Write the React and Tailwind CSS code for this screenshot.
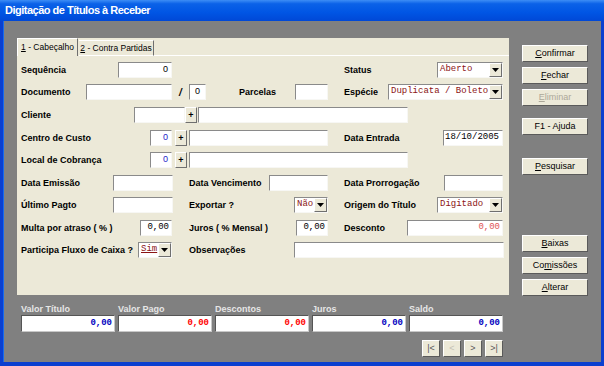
import React from 'react'

const sans = "font-['Liberation_Sans',Arial,sans-serif]"
const mono = "font-['Liberation_Mono','Courier_New',monospace]"

function Label({ w, children }) {
  return (
    <div className={`${sans} shrink-0 text-[9px] font-bold text-black leading-none`} style={{ width: w }}>
      {children}
    </div>
  )
}

function Field({ w, children, className = '' }) {
  return (
    <div
      className={`shrink-0 h-[16px] bg-white border border-t-[#8a8a8a] border-l-[#8a8a8a] border-b-[#f7f7f4] border-r-[#f7f7f4] flex items-center overflow-hidden whitespace-nowrap ${className}`}
      style={{ width: w }}
    >
      {children}
    </div>
  )
}

function Arrow() {
  return (
    <div className="shrink-0 w-[13px] h-full bg-[#ece9d8] border border-t-white border-l-white border-b-[#6f6f6f] border-r-[#6f6f6f] flex items-center justify-center">
      <svg width="7" height="4" viewBox="0 0 7 4"><path d="M0 0h7L3.5 4z" fill="#000" /></svg>
    </div>
  )
}

function Select({ w, children }) {
  return (
    <Field w={w} className="pl-[2px]">
      <span className={`${mono} flex-1 text-[9px] text-[#8b1414]`}>{children}</span>
      <Arrow />
    </Field>
  )
}

function Plus() {
  return (
    <div className={`${sans} shrink-0 w-[12px] h-[16px] bg-[#ece9d8] border border-t-white border-l-white border-b-[#6f6f6f] border-r-[#6f6f6f] flex items-center justify-center text-[9px] font-bold leading-none`}>
      +
    </div>
  )
}

function Gap({ w }) {
  return <div className="shrink-0" style={{ width: w }} />
}

function Row({ top, children }) {
  return (
    <div className="flex items-center h-[16px]" style={{ marginTop: top }}>
      {children}
    </div>
  )
}

function Btn({ children, disabled, mt }) {
  return (
    <div
      className={`${sans} w-[66px] h-[17px] bg-[#ece9d8] border border-t-white border-l-white border-b-[#5a5a5a] border-r-[#5a5a5a] flex items-center justify-center text-[9px] leading-none ${disabled ? 'text-[#aca899]' : 'text-black'}`}
      style={{ marginTop: mt }}
    >
      {children}
    </div>
  )
}

function Total({ label, value, color }) {
  return (
    <div className="w-[94px] flex flex-col">
      <div className={`${sans} h-[12px] text-[9px] font-bold text-[#e6e6e6] leading-none pt-[2px]`}>{label}</div>
      <div className="h-[17px] bg-white border border-t-[#555] border-l-[#555] border-b-[#c8c8c8] border-r-[#c8c8c8] flex items-center justify-end pr-[2px]">
        <span className={`${mono} text-[9px] font-bold ${color}`}>{value}</span>
      </div>
    </div>
  )
}

function Nav({ children, disabled }) {
  return (
    <div className={`${sans} w-[18px] h-[17px] bg-[#ece9d8] border border-t-white border-l-white border-b-[#5a5a5a] border-r-[#5a5a5a] flex items-center justify-center text-[9px] leading-none ${disabled ? 'text-[#c4c1b4]' : 'text-[#555]'}`}>
      {children}
    </div>
  )
}

export default function App() {
  return (
    <div className="w-[604px] h-[366px] flex flex-col bg-[#0a3fd0] overflow-hidden">
      {/* Title bar */}
      <div className="h-[21px] shrink-0 bg-[linear-gradient(to_bottom,#3d8df5_0%,#0b62e8_18%,#0055e4_60%,#0048d6_100%)] flex items-center pl-[5px]">
        <span className={`${sans} text-[11px] font-bold text-white tracking-[-0.5px] leading-none`}>
          Digitação de Títulos à Receber
        </span>
      </div>

      {/* Body */}
      <div className="flex-1 flex mx-[3px] mb-[4px] bg-[#808080] border-l border-[#166aee]">
        <div className="flex flex-col pl-[13px] pt-[17px]">
          {/* Tab panel */}
          <div className="w-[492px] h-[257px] bg-[#ece9d8] flex flex-col">
            <div className="flex items-end h-[18px]">
              <div className={`${sans} h-[18px] w-[61px] border-t border-l border-white border-r border-r-[#6f6f6f] flex items-center justify-center text-[8.5px] text-black`}>
                <span><u>1</u> - Cabeçalho</span>
              </div>
              <div className={`${sans} h-[16px] w-[75px] ml-[1px] border-t border-white border-r border-r-[#6f6f6f] border-b border-b-white flex items-center justify-center text-[8.5px] text-black`}>
                <span><u>2</u> - Contra Partidas</span>
              </div>
              <div className="flex-1 h-[1px] bg-white" />
            </div>

            <div className="flex flex-col pl-[4px]">
              <Row top={6}>
                <Label w={97}>Sequência</Label>
                <Field w={54} className="justify-end pr-[3px]">
                  <span className={`${sans} text-[9px]`}>0</span>
                </Field>
                <Gap w={172} />
                <Label w={93}>Status</Label>
                <Select w={66}>Aberto</Select>
              </Row>

              <Row top={6}>
                <Label w={65}>Documento</Label>
                <Field w={86} />
                <div className={`${sans} shrink-0 w-[17px] text-center text-[10px] font-bold italic`}>/</div>
                <Field w={17} className="justify-center">
                  <span className={`${sans} text-[9px]`}>0</span>
                </Field>
                <Gap w={33} />
                <Label w={56}>Parcelas</Label>
                <Field w={33} />
                <Gap w={16} />
                <Label w={44}>Espécie</Label>
                <Select w={115}>Duplicata / Boleto</Select>
              </Row>

              <Row top={7}>
                <Label w={113}>Cliente</Label>
                <Field w={51} />
                <Plus />
                <Gap w={1} />
                <Field w={210} />
              </Row>

              <Row top={7}>
                <Label w={129}>Centro de Custo</Label>
                <Field w={22} className="justify-end pr-[3px]">
                  <span className={`${sans} text-[9px] text-[#2424c8]`}>0</span>
                </Field>
                <Gap w={3} />
                <Plus />
                <Gap w={2} />
                <Field w={139} />
                <Gap w={16} />
                <Label w={99}>Data Entrada</Label>
                <Field w={60} className="pl-[1px]">
                  <span className={`${mono} text-[9px]`}>18/10/2005</span>
                </Field>
              </Row>

              <Row top={6}>
                <Label w={129}>Local de Cobrança</Label>
                <Field w={22} className="justify-end pr-[3px]">
                  <span className={`${sans} text-[9px] text-[#2424c8]`}>0</span>
                </Field>
                <Gap w={3} />
                <Plus />
                <Gap w={2} />
                <Field w={219} />
              </Row>

              <Row top={7}>
                <Label w={92}>Data Emissão</Label>
                <Field w={60} />
                <Gap w={16} />
                <Label w={80}>Data Vencimento</Label>
                <Field w={59} />
                <Gap w={16} />
                <Label w={100}>Data Prorrogação</Label>
                <Field w={59} />
              </Row>

              <Row top={6}>
                <Label w={92}>Último Pagto</Label>
                <Field w={60} />
                <Gap w={16} />
                <Label w={105}>Exportar ?</Label>
                <Select w={34}>Não</Select>
                <Gap w={16} />
                <Label w={93}>Origem do Título</Label>
                <Select w={66}>Digitado</Select>
              </Row>

              <Row top={7}>
                <Label w={119}>Multa por atraso ( % )</Label>
                <Field w={32} className="justify-end pr-[2px]">
                  <span className={`${mono} text-[9px]`}>0,00</span>
                </Field>
                <Gap w={17} />
                <Label w={107}>Juros ( % Mensal )</Label>
                <Field w={32} className="justify-end pr-[2px]">
                  <span className={`${mono} text-[9px]`}>0,00</span>
                </Field>
                <Gap w={16} />
                <Label w={63}>Desconto</Label>
                <Field w={96} className="justify-end pr-[2px]">
                  <span className={`${mono} text-[9px] text-[#e05555]`}>0,00</span>
                </Field>
              </Row>

              <Row top={6}>
                <Label w={117}>Participa Fluxo de Caixa ?</Label>
                <Select w={34}><u>Sim</u></Select>
                <Gap w={17} />
                <Label w={105}>Observações</Label>
                <Field w={210} />
              </Row>
            </div>
          </div>

          {/* Totals */}
          <div className="flex gap-[3px] mt-[8px] ml-[4px]">
            <Total label="Valor Título" value="0,00" color="text-[#0000c0]" />
            <Total label="Valor Pago" value="0,00" color="text-[#ff0000]" />
            <Total label="Descontos" value="0,00" color="text-[#ff0000]" />
            <Total label="Juros" value="0,00" color="text-[#0000c0]" />
            <Total label="Saldo" value="0,00" color="text-[#0000c0]" />
          </div>

          {/* Navigation */}
          <div className="flex justify-end gap-[3px] mt-[8px] w-[486px]">
            <Nav>|&lt;</Nav>
            <Nav disabled>&lt;</Nav>
            <Nav>&gt;</Nav>
            <Nav>&gt;|</Nav>
          </div>
        </div>

        {/* Right buttons */}
        <div className="flex flex-col ml-[13px] pt-[24px]">
          <Btn mt={0}><span><u>C</u>onfirmar</span></Btn>
          <Btn mt={5}><span><u>F</u>echar</span></Btn>
          <Btn mt={5} disabled><span><u>E</u>liminar</span></Btn>
          <Btn mt={12}>F1 - Ajuda</Btn>
          <Btn mt={23}><span><u>P</u>esquisar</span></Btn>
          <Btn mt={60}><span><u>B</u>aixas</span></Btn>
          <Btn mt={5}><span>Co<u>m</u>issões</span></Btn>
          <Btn mt={5}><span><u>A</u>lterar</span></Btn>
        </div>
      </div>
    </div>
  )
}
